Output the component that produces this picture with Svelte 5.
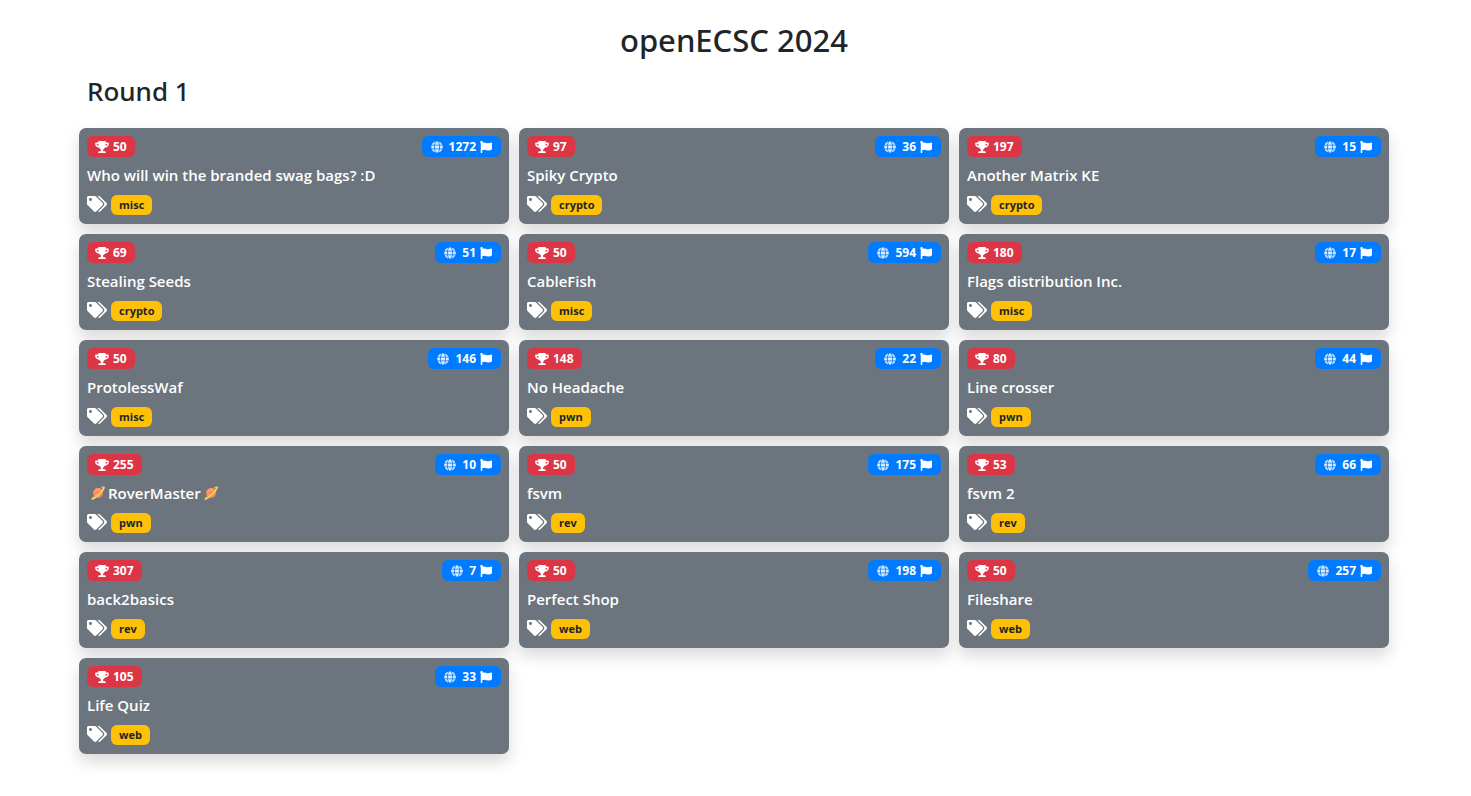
<script>
  const challenges = [
    { points: 50, solves: 1272, name: 'Who will win the branded swag bags? :D', tag: 'misc' },
    { points: 97, solves: 36, name: 'Spiky Crypto', tag: 'crypto' },
    { points: 197, solves: 15, name: 'Another Matrix KE', tag: 'crypto' },
    { points: 69, solves: 51, name: 'Stealing Seeds', tag: 'crypto' },
    { points: 50, solves: 594, name: 'CableFish', tag: 'misc' },
    { points: 180, solves: 17, name: 'Flags distribution Inc.', tag: 'misc' },
    { points: 50, solves: 146, name: 'ProtolessWaf', tag: 'misc' },
    { points: 148, solves: 22, name: 'No Headache', tag: 'pwn' },
    { points: 80, solves: 44, name: 'Line crosser', tag: 'pwn' },
    { points: 255, solves: 10, name: 'RoverMaster', tag: 'pwn', planets: true },
    { points: 50, solves: 175, name: 'fsvm', tag: 'rev' },
    { points: 53, solves: 66, name: 'fsvm 2', tag: 'rev' },
    { points: 307, solves: 7, name: 'back2basics', tag: 'rev' },
    { points: 50, solves: 198, name: 'Perfect Shop', tag: 'web' },
    { points: 50, solves: 257, name: 'Fileshare', tag: 'web' },
    { points: 105, solves: 33, name: 'Life Quiz', tag: 'web' }
  ];
</script>

{#snippet planet()}
  <svg class="planet" viewBox="0 0 16 16" aria-hidden="true">
    <path d="M4 12 C1 15 1 15.500 2 15 C5 14.500 14 6 15 2 C15.200 .6 14 .8 11.500 2.500" fill="none" stroke="#f2c14e" stroke-width="1.400" />
    <circle cx="8" cy="8" r="5.600" fill="#f58b55" />
    <path d="M4.500 4 L10.500 3 M3 7 L12 4.500 M4 11 L13 7" stroke="#ffb27a" stroke-width="1" />
    <path d="M1.500 14.600 C5.500 13.500 12.500 7.500 14.700 2" fill="none" stroke="#ffd45c" stroke-width="1.600" stroke-linecap="round" />
  </svg>
{/snippet}

<main>
  <h1>openECSC 2024</h1>
  <section>
    <h2>Round 1</h2>
    <div class="grid">
      {#each challenges as c}
        <article class="card">
          <div class="top">
            <span class="badge points">
              <svg class="trophy" viewBox="0 0 576 512" aria-hidden="true"><path d="M552 64H448V24c0-13.300-10.700-24-24-24H152c-13.300 0-24 10.700-24 24v40H24C10.700 64 0 74.700 0 88v56c0 35.700 22.500 72.400 61.900 100.700 31.500 22.700 69.800 37.100 110 41.700C203.300 338.500 240 360 240 360v72h-48c-35.300 0-64 20.700-64 56v12c0 6.600 5.400 12 12 12h296c6.600 0 12-5.400 12-12v-12c0-35.300-28.700-56-64-56h-48v-72s36.700-21.500 68.100-73.600c40.300-4.600 78.600-19 110-41.700 39.300-28.300 61.900-65 61.900-100.700V88c0-13.300-10.700-24-24-24zM99.300 192.800C74.900 175.200 64 155.600 64 144v-16h64.200c1 32.600 5.800 61.200 12.800 86.200-15.100-5.200-29.200-12.400-41.700-21.400zM512 144c0 16.100-17.700 36.100-35.300 48.800-12.500 9-26.700 16.200-41.800 21.400 7-25 11.800-53.600 12.800-86.200H512v16z" /></svg>
              {c.points}
            </span>
            <span class="badge solves">
              <svg class="globe" viewBox="0 0 496 512" aria-hidden="true"><path d="M336.500 160C322 70.700 287.800 8 248 8s-74 62.700-88.500 152h177zM152 256c0 22.200 1.200 43.500 3.300 64h185.300c2.100-20.500 3.300-41.800 3.300-64s-1.200-43.500-3.300-64H155.300c-2.100 20.500-3.300 41.800-3.300 64zm324.700-96c-28.600-67.900-86.500-120.400-158-141.600 24.400 33.800 41.200 84.700 50 141.600h108zM177.200 18.400C105.800 39.600 47.800 92.100 19.300 160h108c8.700-56.900 25.500-107.800 49.900-141.600zM487.400 192H372.700c2.100 21 3.300 42.500 3.300 64s-1.200 43-3.300 64h114.600c5.500-20.500 8.600-41.800 8.600-64s-3.100-43.500-8.500-64zM120 256c0-21.500 1.200-43 3.300-64H8.600C3.200 212.500 0 233.800 0 256s3.200 43.500 8.600 64h114.600c-2-21-3.200-42.500-3.200-64zm39.500 96c14.500 89.300 48.700 152 88.500 152s74-62.700 88.500-152h-177zm159.300 141.600c71.400-21.200 129.400-73.700 158-141.600h-108c-8.800 56.900-25.600 107.800-50 141.600zM19.300 352c28.600 67.900 86.500 120.400 158 141.600-24.400-33.800-41.200-84.700-50-141.600h-108z" /></svg>
              {c.solves}
              <svg class="flag" viewBox="0 0 512 512" aria-hidden="true"><path d="M349.565 98.783C295.978 98.783 251.721 64 184.348 64c-24.955 0-47.309 4.384-68.045 12.013a55.947 55.947 0 0 0 3.586-23.562C118.117 24.015 94.806 1.206 66.338.048 34.345-1.254 8 24.296 8 56c0 19.026 9.497 35.825 24 45.945V488c0 13.255 10.745 24 24 24h16c13.255 0 24-10.745 24-24v-94.400c28.311-12.064 63.582-22.122 114.435-22.122 53.588 0 97.844 34.783 165.217 34.783 48.169 0 86.667-16.294 122.505-40.858C506.840 359.452 512 349.571 512 339.045v-243.100c0-23.393-24.269-38.870-45.485-29.016-34.338 15.948-76.454 31.854-116.950 31.854z" /></svg>
            </span>
          </div>
          <h3>
            {#if c.planets}{@render planet()}{/if}
            <span>{c.name}</span>
            {#if c.planets}{@render planet()}{/if}
          </h3>
          <div class="tags">
            <svg class="tag-icon" viewBox="0 0 640 512" aria-hidden="true"><path d="M497.941 225.941L286.059 14.059A48 48 0 0 0 252.118 0H48C21.490 0 0 21.490 0 48v204.118a48 48 0 0 0 14.059 33.941l211.882 211.882c18.744 18.745 49.136 18.746 67.882 0l204.118-204.118c18.745-18.745 18.745-49.137 0-67.882zM112 160c-26.510 0-48-21.490-48-48s21.490-48 48-48 48 21.490 48 48-21.490 48-48 48zm513.941 133.823L421.823 497.941c-18.745 18.745-49.137 18.745-67.882 0l-.36-.36L527.640 323.522c16.999-16.999 26.362-39.600 26.362-63.640s-9.362-46.641-26.362-63.640L331.397 0h48.721a48 48 0 0 1 33.941 14.059l211.882 211.882c18.745 18.745 18.745 49.137 0 67.882z" /></svg>
            <span class="badge tag">{c.tag}</span>
          </div>
        </article>
      {/each}
    </div>
  </section>
</main>

<style>
  :global(body) {
    background: #fff;
    color: #212529;
    font-family: "Segoe UI", "Open Sans", "Noto Sans", sans-serif;
  }

  main {
    max-width: 1310px;
    margin: 0 auto;
    padding: 20px 3px 40px 0;
  }

  h1,
  h2,
  h3 {
    margin: 0;
  }

  h1,
  h2 {
    font-family: "Segoe UI", "Noto Sans", "Open Sans", sans-serif;
    font-weight: 500;
  }

  h1 {
    font-size: 31px;
    line-height: 40px;
    text-align: center;
  }

  h2 {
    padding: 14px 8px 20px;
    font-size: 26px;
    line-height: 34px;
  }

  .grid {
    display: grid;
    grid-template-columns: repeat(3, minmax(0, 1fr));
    gap: 10px;
  }

  .card {
    box-sizing: border-box;
    display: flex;
    flex-direction: column;
    padding: 8px 8px 9px;
    border-radius: 7px;
    background: #6c757d;
    color: #fff;
    box-shadow: 0 8px 16px rgba(0, 0, 0, 0.15);
  }

  .top {
    display: flex;
    justify-content: space-between;
  }

  .badge {
    display: inline-flex;
    align-items: center;
    gap: 4px;
    padding: 0 8px;
    border-radius: 6px;
    font-size: 12px;
    font-weight: 700;
    line-height: 21px;
  }

  .points {
    background: #dc3545;
  }

  .solves {
    padding: 0 9px;
    background: #007bff;
  }

  svg {
    flex: none;
    fill: currentColor;
  }

  .trophy {
    width: 14px;
    height: 12px;
  }

  .globe {
    width: 12px;
    height: 12px;
    margin-right: 2px;
    opacity: 0.85;
  }

  .flag {
    width: 12px;
    height: 12px;
  }

  h3 {
    display: flex;
    align-items: center;
    gap: 3px;
    margin: 8px 0 10px;
    font-size: 15px;
    font-weight: 600;
    line-height: 20px;
  }

  .planet {
    width: 14px;
    height: 14px;
    margin-left: 4px;
  }

  span + .planet {
    margin: 0;
  }

  .tags {
    display: flex;
    gap: 4px;
  }

  .tag-icon {
    width: 20px;
    height: 16px;
    margin-top: 1px;
  }

  .tag {
    background: #ffc107;
    color: #212529;
    font-size: 11px;
    line-height: 20px;
  }
</style>
